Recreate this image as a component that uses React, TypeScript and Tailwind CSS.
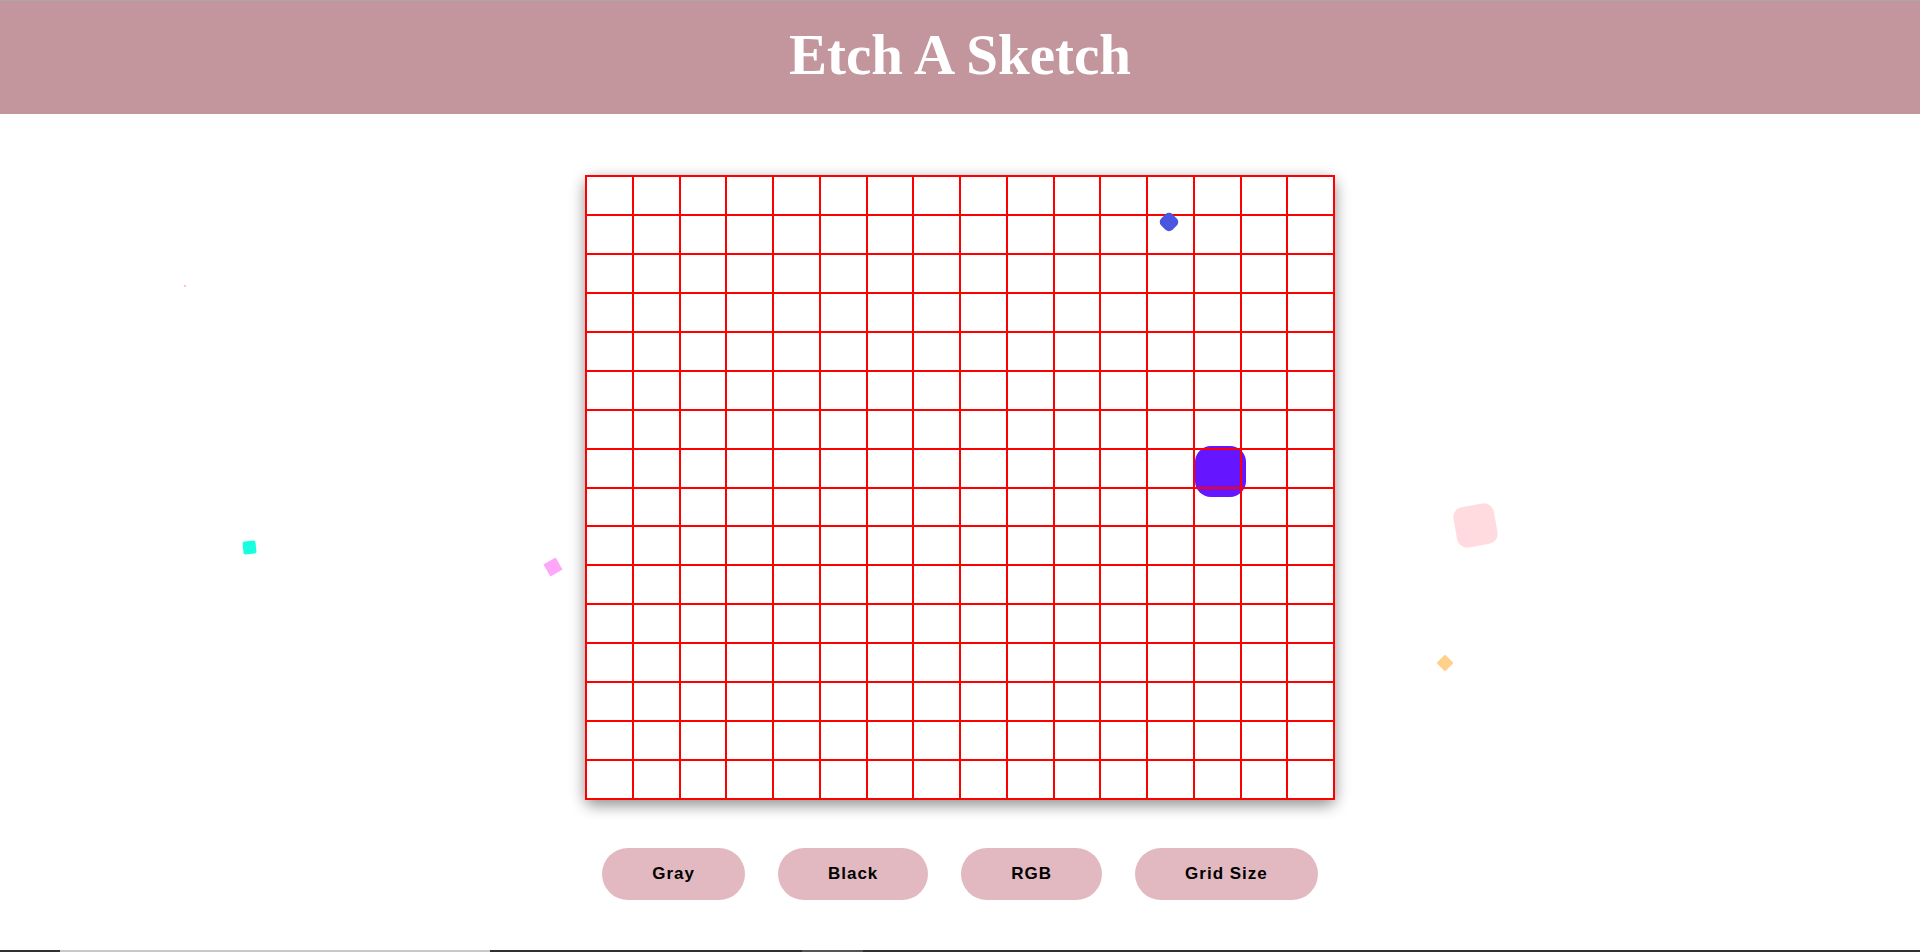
import React from "react";

const cells = Array.from({ length: 256 }, (_, i) => i);

export default function App() {
  return (
    <div className="relative flex min-h-[952px] w-full flex-col overflow-hidden bg-white">
      <div className="h-px bg-[#a9a9a9]" />
      <header className="flex h-[113px] items-center justify-center bg-[#c3969e] pb-[7px]">
        <h1 className="text-[57px] font-bold leading-none text-white [font-family:'Liberation_Serif',Georgia,serif]">
          Etch A Sketch
        </h1>
      </header>

      <main className="flex flex-1 flex-col items-center pt-[61px]">
        <div className="relative h-[625px] w-[750px] rounded-lg bg-white shadow-[0_5px_15px_rgba(0,0,0,0.45)]">
          <div className="absolute left-[610px] top-[271px] h-[51px] w-[51px] rounded-[16px] bg-[#6515ff]" />
          <div className="relative grid h-full w-full grid-cols-16 grid-rows-16 border-l-2 border-t-2 border-[#ff0000]">
            {cells.map((i) => (
              <div key={i} className="border-b-2 border-r-2 border-[#ff0000]" />
            ))}
          </div>
          <div className="absolute left-[576px] top-[39px] h-[16px] w-[16px] rotate-45 rounded-[5px] bg-[#4a55e0]" />
        </div>

        <div className="mt-[48px] flex gap-[33px] [font-family:'Liberation_Sans',Arial,sans-serif]">
          {["Gray", "Black", "RGB", "Grid Size"].map((t) => (
            <button
              key={t}
              className="h-[52px] rounded-full bg-[#e3b9c1] px-[50px] text-[17px] font-bold tracking-[1px] text-black"
            >
              {t}
            </button>
          ))}
        </div>
      </main>

      {/* floating confetti on the free canvas */}
      <div className="absolute left-[184px] top-[285px] h-[2px] w-[2px] bg-[#ffc4c4]" />
      <div className="absolute left-[243px] top-[541px] h-[13px] w-[13px] -rotate-6 rounded-[2px] bg-[#1affe0]" />
      <div className="absolute left-[546px] top-[560px] h-[14px] w-[14px] rotate-[-30deg] bg-[#ffa6f8]" />
      <div className="absolute left-[1455px] top-[505px] h-[41px] w-[41px] rotate-[-10deg] rounded-[10px] bg-[#ffdbe0]" />
      <div className="absolute left-[1439px] top-[657px] h-[12px] w-[12px] rotate-45 rounded-[1px] bg-[#ffd08a]" />

      {/* bottom strip */}
      <div className="flex h-[2px] w-full">
        <div className="w-[60px] bg-[#303030]" />
        <div className="w-[430px] bg-[#c8c8c8]" />
        <div className="w-[312px] bg-[#303030]" />
        <div className="w-[61px] bg-[#555555]" />
        <div className="flex-1 bg-[#303030]" />
      </div>
    </div>
  );
}
